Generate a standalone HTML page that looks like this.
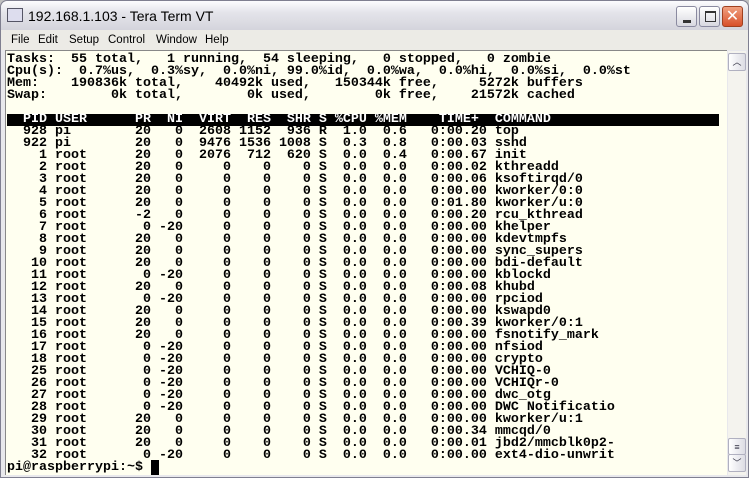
<!DOCTYPE html>
<html><head><meta charset="utf-8"><style>
*{margin:0;padding:0;box-sizing:border-box}
body{width:749px;height:478px;overflow:hidden;background:#c0c0c0;font-family:"Liberation Sans",sans-serif}
#win{position:absolute;left:0;top:0;width:749px;height:478px;background:#e8e8ec;border:1px solid #7f7f90;border-radius:7px 7px 0 0}
#title{position:absolute;left:0;top:0;width:747px;height:29px;background:linear-gradient(#fcfcfe,#e4e4ea 40%,#d4d4dc);border-radius:7px 7px 0 0}
#title span{position:absolute;left:27px;top:7px;font-size:14px;color:#000}
#ico{position:absolute;left:6px;top:7px;width:16px;height:14px;background:#dde;border:1px solid #556}
.btn{position:absolute;top:5px;width:21px;height:21px;border:1px solid #8a8aa0;border-radius:3px;background:linear-gradient(#fff,#d8d8e0)}
#menu{position:absolute;left:0;top:29px;width:747px;height:20px;background:#ecebe6;font-size:11.5px}
#menu span{position:absolute;top:4px}
#term{position:absolute;left:4px;top:49px;width:722px;height:425px;background:#fffff0;border-top:1px solid #888;border-left:1px solid #888}
pre{position:absolute;left:1px;top:3px;font-family:"Liberation Mono",monospace;font-weight:bold;font-size:13.33px;line-height:12px;color:#000;letter-spacing:0}
.hd{background:#000;color:#fff;display:inline-block;width:712px}
#sb{position:absolute;left:727px;top:50px;width:18px;height:424px;background:#f4f3ee}
.sbb{position:absolute;left:0;width:18px;height:18px;border:1px solid #b0b0c0;border-radius:2px;background:linear-gradient(90deg,#fff,#dcdce4);font-size:9px;text-align:center;line-height:16px;color:#334}
</style></head><body>
<div id="win">
<div id="title"><div id="ico"></div><span>192.168.1.103 - Tera Term VT</span>
<div class="btn" style="left:675px"><div style="position:absolute;left:6px;top:13px;width:8px;height:3px;background:#333"></div></div>
<div class="btn" style="left:698px"><div style="position:absolute;left:5px;top:4px;width:11px;height:11px;border:1px solid #333;border-top-width:2px"></div></div>
<div class="btn" style="left:721px;background:linear-gradient(#f0a080,#d8502a);border-color:#a04020;color:#fff;font-size:16px;text-align:center;line-height:20px">✕</div>
</div>
<div id="menu"><span style="left:10px">File</span><span style="left:37px">Edit</span><span style="left:68px">Setup</span><span style="left:107px">Control</span><span style="left:155px">Window</span><span style="left:204px">Help</span></div>
<div id="term"><pre>Tasks:  55 total,   1 running,  54 sleeping,   0 stopped,   0 zombie
Cpu(s):  0.7%us,  0.3%sy,  0.0%ni, 99.0%id,  0.0%wa,  0.0%hi,  0.0%si,  0.0%st
Mem:    190836k total,    40492k used,   150344k free,     5272k buffers
Swap:        0k total,        0k used,        0k free,    21572k cached

<span class="hd">  PID USER      PR  NI  VIRT  RES  SHR S %CPU %MEM    TIME+  COMMAND</span>
  928 pi        20   0  2608 1152  936 R  1.0  0.6   0:00.20 top
  922 pi        20   0  9476 1536 1008 S  0.3  0.8   0:00.03 sshd
    1 root      20   0  2076  712  620 S  0.0  0.4   0:00.67 init
    2 root      20   0     0    0    0 S  0.0  0.0   0:00.02 kthreadd
    3 root      20   0     0    0    0 S  0.0  0.0   0:00.06 ksoftirqd/0
    4 root      20   0     0    0    0 S  0.0  0.0   0:00.00 kworker/0:0
    5 root      20   0     0    0    0 S  0.0  0.0   0:01.80 kworker/u:0
    6 root      -2   0     0    0    0 S  0.0  0.0   0:00.20 rcu_kthread
    7 root       0 -20     0    0    0 S  0.0  0.0   0:00.00 khelper
    8 root      20   0     0    0    0 S  0.0  0.0   0:00.00 kdevtmpfs
    9 root      20   0     0    0    0 S  0.0  0.0   0:00.00 sync_supers
   10 root      20   0     0    0    0 S  0.0  0.0   0:00.00 bdi-default
   11 root       0 -20     0    0    0 S  0.0  0.0   0:00.00 kblockd
   12 root      20   0     0    0    0 S  0.0  0.0   0:00.08 khubd
   13 root       0 -20     0    0    0 S  0.0  0.0   0:00.00 rpciod
   14 root      20   0     0    0    0 S  0.0  0.0   0:00.00 kswapd0
   15 root      20   0     0    0    0 S  0.0  0.0   0:00.39 kworker/0:1
   16 root      20   0     0    0    0 S  0.0  0.0   0:00.00 fsnotify_mark
   17 root       0 -20     0    0    0 S  0.0  0.0   0:00.00 nfsiod
   18 root       0 -20     0    0    0 S  0.0  0.0   0:00.00 crypto
   25 root       0 -20     0    0    0 S  0.0  0.0   0:00.00 VCHIQ-0
   26 root       0 -20     0    0    0 S  0.0  0.0   0:00.00 VCHIQr-0
   27 root       0 -20     0    0    0 S  0.0  0.0   0:00.00 dwc_otg
   28 root       0 -20     0    0    0 S  0.0  0.0   0:00.00 DWC Notificatio
   29 root      20   0     0    0    0 S  0.0  0.0   0:00.00 kworker/u:1
   30 root      20   0     0    0    0 S  0.0  0.0   0:00.34 mmcqd/0
   31 root      20   0     0    0    0 S  0.0  0.0   0:00.01 jbd2/mmcblk0p2-
   32 root       0 -20     0    0    0 S  0.0  0.0   0:00.00 ext4-dio-unwrit
pi@raspberrypi:~$ <span style="background:#000">&nbsp;</span></pre></div>
<div id="sb"><div class="sbb" style="top:2px">︿</div><div class="sbb" style="top:387px;height:17px">≡</div><div class="sbb" style="top:403px">﹀</div></div>
</div>
</body></html>
